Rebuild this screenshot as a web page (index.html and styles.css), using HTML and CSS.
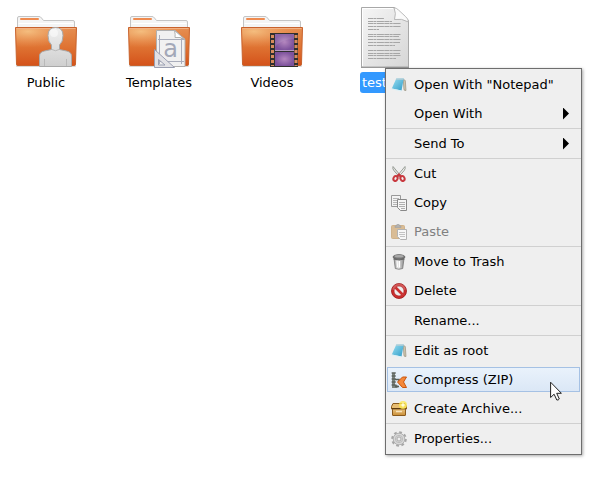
FILE: index.html
```
<!DOCTYPE html>
<html lang="en">
<head>
  <meta charset="UTF-8">
  <meta name="viewport" content="width=device-width, initial-scale=1.0">
  <title>Files</title>
  <link rel="stylesheet" href="styles.css">
</head>
<body>
  <!-- shared shapes -->
  <svg class="defs" width="0" height="0" aria-hidden="true">
    <defs>
      <linearGradient id="orange" x1="0" y1="0" x2="0" y2="1">
        <stop offset="0" stop-color="#e58f52"/>
        <stop offset="0.5" stop-color="#df7433"/>
        <stop offset="1" stop-color="#d4521a"/>
      </linearGradient>
      <radialGradient id="shine" cx="0.2" cy="0.15" r="0.7">
        <stop offset="0" stop-color="#f6c384" stop-opacity="0.9"/>
        <stop offset="1" stop-color="#f0a060" stop-opacity="0"/>
      </radialGradient>
      <linearGradient id="paper" x1="0" y1="0" x2="1" y2="1">
        <stop offset="0" stop-color="#f6f6f6"/>
        <stop offset="1" stop-color="#d6d6d6"/>
      </linearGradient>
      <linearGradient id="person" x1="0" y1="0" x2="0" y2="1">
        <stop offset="0" stop-color="#f0f0f0"/>
        <stop offset="1" stop-color="#cfcfcf"/>
      </linearGradient>
      <radialGradient id="purple">
        <stop offset="0" stop-color="#b487bf"/>
        <stop offset="1" stop-color="#7d529c"/>
      </radialGradient>
      <linearGradient id="blue" x1="0" y1="0" x2="1" y2="1">
        <stop offset="0" stop-color="#9be0f2"/>
        <stop offset="1" stop-color="#2f9cc8"/>
      </linearGradient>
      <linearGradient id="metal" x1="0" y1="0" x2="1" y2="0">
        <stop offset="0" stop-color="#999"/>
        <stop offset="0.4" stop-color="#eee"/>
        <stop offset="1" stop-color="#8a8a8a"/>
      </linearGradient>
      <linearGradient id="box" x1="0" y1="0" x2="0" y2="1">
        <stop offset="0" stop-color="#edc987"/>
        <stop offset="1" stop-color="#c98d35"/>
      </linearGradient>

      <symbol id="folder" viewBox="0 0 64 64">
        <rect x="2" y="60" width="60" height="3" rx="1" fill="#000" opacity="0.15"/>
        <path d="M3.500 26V14q0-1.500 1.500-1.500h20q1.500 0 2.500 1.500l2 2.500h29.500q1.500 0 1.500 1.500v8z" fill="#f4f4f4" stroke="#c4c4c4"/>
        <rect x="6" y="14" width="19" height="2" rx="1" fill="#ef8b50"/>
        <path d="M4.500 19.500h55" stroke="#fff"/>
        <path d="M1.500 23.500h61l-1 36.500q0 1.500-1.500 1.500H4q-1.500 0-1.500-1.500z" fill="url(#orange)" stroke="#c8622c"/>
        <path d="M2 24h60l-.6 14C42 40 22 44 3 47z" fill="url(#shine)"/>
        <path d="M2.500 24.500h59" stroke="#f3b183"/>
      </symbol>

      <symbol id="note" viewBox="0 0 16 16">
        <path d="M12.300 2.300l2 1.200.7 10-1.800-.3-.3-1.200z" fill="#cfc6ae" stroke="#8b8472" stroke-width=".6"/>
        <path d="M5.300 1.500h7.500L10.500 13.500.8 11.500z" fill="url(#blue)"/>
        <path d="M5.300 1.500h7.500l-.3 1.300H4.800z" fill="#b9cdd4"/>
        <path d="M.8 11.500l9.700 2-.2 1-9.700-2.200z" fill="#d9f0f7"/>
      </symbol>
    </defs>
  </svg>

  <main class="files">
    <button class="file" type="button">
      <svg class="file-icon" viewBox="0 0 64 64" aria-hidden="true">
        <use href="#folder"/>
        <path d="M25.500 62.500V52q0-4 5-5l7-1.500v-4.500q-3.500-3-3.500-9.500 0-8 7.500-8t7.500 8q0 6.500-3.500 9.500v4.500l7 1.500q5 1 5 5v10.500z" fill="url(#person)" stroke="#a9a9a9"/>
        <path d="M38 45.500q3.500 2.500 7 0M30.500 55v7M52.500 55v7" fill="none" stroke="#b9b9b9"/>
        <ellipse cx="40" cy="29" rx="4" ry="4" fill="#fff" opacity="0.5"/>
      </svg>
      <span class="file-name">Public</span>
    </button>
    <button class="file" type="button">
      <svg class="file-icon" viewBox="0 0 64 64" aria-hidden="true">
        <use href="#folder"/>
        <path d="M29.500 26.500H48l10 9v27H29.500z" fill="#f1f1f1" stroke="#b0b0b0"/>
        <path d="M32.500 31v29M54.500 33v27M31 35.500h26M31 57.500h26" stroke="#a9adbb"/>
        <path d="M47.500 26.500q1 4 .5 7 5-1 10 2z" fill="#fff" stroke="#b0b0b0"/>
        <text class="glyph" x="43.500" y="53" text-anchor="middle">a</text>
        <path d="M27.500 45.500v18h20z M31.500 55.500l6.500 5.500h-6.500z" fill="#e2e2e6" fill-rule="evenodd" stroke="#9a9fb2"/>
      </svg>
      <span class="file-name">Templates</span>
    </button>
    <button class="file" type="button">
      <svg class="file-icon" viewBox="0 0 64 64" aria-hidden="true">
        <use href="#folder"/>
        <rect x="30" y="29" width="28" height="34" fill="#303030"/>
        <path d="M32.500 31v31M56 31v31" stroke="#d78b5d" stroke-width="3" stroke-dasharray="3 2"/>
        <rect x="35" y="30" width="19" height="16" fill="url(#purple)"/>
        <rect x="35" y="48" width="19" height="14" fill="url(#purple)"/>
        <path d="M35 46.500h19" stroke="#b59ac4"/>
        <path d="M35 30h19v5q-12 0-19 8z" fill="#fff" opacity="0.1"/>
      </svg>
      <span class="file-name">Videos</span>
    </button>
    <button class="file selected" type="button">
      <svg class="file-icon" viewBox="0 0 64 64" aria-hidden="true">
        <path d="M8.500 3.500h32.500l14.500 13v46.500h-47z" fill="url(#paper)" stroke="#a8a8a8"/>
        <path d="M9.500 62V4.500H40" fill="none" stroke="#fff"/>
        <path d="M8 63.500h48" stroke="#999"/>
        <g stroke="#a6a6a6" stroke-dasharray="5 .4 3 .5 7 .4">
          <path d="M15 14.500h16M15 17.500h24M15 19.500h33M15 22.500h33M15 25.500h11"/>
          <path d="M15 30.500h33M15 32.500h31M15 35.500h33M15 38.500h32M15 41.500h27"/>
          <path d="M15 46.500h33M15 49.500h32M15 51.500h33M15 54.500h28"/>
        </g>
        <path d="M41 3.500q2.500 6 .5 12 7-1.500 14 2.500 0-3-3-5.500l-7-6.500q-2-2-4.500-2.500z" fill="#fafafa" stroke="#aaa" stroke-width=".8"/>
      </svg>
      <span class="file-name">test</span>
    </button>
  </main>

  <div class="menu" role="menu">
    <button class="item" type="button" role="menuitem">
      <svg class="icon" aria-hidden="true"><use href="#note"/></svg>
      Open With "Notepad"
    </button>
    <button class="item" type="button" role="menuitem">
      <span class="icon"></span>
      Open With
      <span class="arrow"></span>
    </button>
    <hr>
    <button class="item" type="button" role="menuitem">
      <span class="icon"></span>
      Send To
      <span class="arrow"></span>
    </button>
    <hr>
    <button class="item" type="button" role="menuitem">
      <svg class="icon" viewBox="0 0 16 16" aria-hidden="true">
        <path d="M2 .5q-.8 2 .8 4L8.500 11l1-1.500z" fill="#dfe1de" stroke="#878b84" stroke-width=".8"/>
        <path d="M14 .5q.8 2-.8 4L7.500 11l-1-1.500z" fill="#eceeea" stroke="#878b84" stroke-width=".8"/>
        <g fill="none" stroke="#c8383e" stroke-width="2">
          <ellipse cx="4.500" cy="12.500" rx="2" ry="2.500" transform="rotate(25 4.500 12.500)"/>
          <ellipse cx="11.500" cy="12.500" rx="2" ry="2.500" transform="rotate(-25 11.500 12.500)"/>
          <path d="M6 10.500L8 8.500l2 2"/>
        </g>
      </svg>
      Cut
    </button>
    <button class="item" type="button" role="menuitem">
      <svg class="icon" viewBox="0 0 16 16" aria-hidden="true">
        <path d="M.5.500h9v11h-9z" fill="#f3f3f3" stroke="#999"/>
        <path d="M2 3.500h6M2 5.500h6M2 7.500h6M2 9.500h4" stroke="#b5b5b5"/>
        <path d="M6.500 4.500h9v11h-6l-3-3z" fill="#f6f6f6" stroke="#888"/>
        <path d="M8 7.500h6M8 9.500h6M8 11.500h6M10 13.500h4" stroke="#b0b0b0"/>
      </svg>
      Copy
    </button>
    <button class="item" type="button" role="menuitem" disabled>
      <svg class="icon" viewBox="0 0 16 16" aria-hidden="true">
        <rect x=".5" y="1.500" width="13" height="13" rx="1" fill="#c58a3d" stroke="#b0762a"/>
        <path d="M4 3.500V2h1.500q0-2 1.500-2t1.500 2H10v1.500z" fill="#777" stroke="#555" stroke-width=".6"/>
        <path d="M6.500 5.500h9v10h-6l-3-3z" fill="#fff" stroke="#777"/>
        <path d="M8 8.500h6M8 10.500h6M9 12.500h5" stroke="#999"/>
      </svg>
      Paste
    </button>
    <hr>
    <button class="item" type="button" role="menuitem">
      <svg class="icon" viewBox="0 0 16 16" aria-hidden="true">
        <path d="M3 4.500h10l-1.300 10q-3.700 1.500-7.400 0z" fill="url(#metal)" stroke="#777" stroke-width=".8"/>
        <path d="M6 7l.5 6M8.500 7v6.500" stroke="#fff"/>
        <ellipse cx="8" cy="3" rx="6" ry="2.400" fill="#777" stroke="#555" stroke-width=".6"/>
        <ellipse cx="8" cy="2.300" rx="4.500" ry="1.300" fill="#aaa"/>
        <path d="M2.500 5q5.500 2 11 0" fill="none" stroke="#666"/>
      </svg>
      Move to Trash
    </button>
    <button class="item" type="button" role="menuitem">
      <svg class="icon" viewBox="0 0 16 16" aria-hidden="true">
        <circle cx="8" cy="8" r="7.500" fill="#cc3030" stroke="#9c1414" stroke-width=".8"/>
        <path d="M1.500 7a6.500 6.500 0 0 1 13 0z" fill="#fff" opacity="0.2"/>
        <circle cx="8" cy="8" r="5" fill="#eee" stroke="#a31b1b" stroke-width=".6"/>
        <path d="M4.500 4.500l7 7" stroke="#cc3030" stroke-width="2.600"/>
      </svg>
      Delete
    </button>
    <hr>
    <button class="item" type="button" role="menuitem">
      <span class="icon"></span>
      Rename...
    </button>
    <hr>
    <button class="item" type="button" role="menuitem">
      <svg class="icon" aria-hidden="true"><use href="#note"/></svg>
      Edit as root
    </button>
    <button class="item active" type="button" role="menuitem">
      <svg class="icon" viewBox="0 0 16 16" aria-hidden="true">
        <path d="M2.500.500v14h4" fill="none" stroke="#7b827d" stroke-width="3"/>
        <path d="M.5 1h4.500M.5 4h4.500M.5 7h4.500M.5 10h4.500M.5 13h5" stroke="#4d534f" stroke-width="1.200"/>
        <path d="M4 7.500h4v2.500M4 14.500h4" fill="none" stroke="#59605b" stroke-width="1.500"/>
        <path d="M15.500 5h-4L6.500 10l5 5.500h4L12.500 10z" fill="#f4883a" stroke="#c9550e"/>
      </svg>
      Compress (ZIP)
    </button>
    <button class="item" type="button" role="menuitem">
      <svg class="icon" viewBox="0 0 16 16" aria-hidden="true">
        <path d="M1.500 7.500h13v6.500q0 .5-.5.500H2q-.5 0-.5-.5z" fill="url(#box)" stroke="#8a5a1c"/>
        <path d="M2 2.500h12l1.500 3v2.500H.5V5.500z" fill="#e8bd71" stroke="#8a5a1c"/>
        <path d="M1 7.500h14" stroke="#5c380d"/>
        <path d="M5 10.500h6" stroke="#f7e3bc" stroke-width="1.500"/>
        <circle cx="12" cy="4" r="4" fill="#fce94f" opacity="0.8"/>
        <path d="M12 1l.8 2.200L15 4l-2.200.8L12 7l-.8-2.200L9 4l2.200-.8z" fill="#fffde0"/>
      </svg>
      Create Archive...
    </button>
    <hr>
    <button class="item" type="button" role="menuitem">
      <svg class="icon" viewBox="0 0 16 16" aria-hidden="true">
        <circle cx="8" cy="8" r="6.800" fill="none" stroke="#a6a6a6" stroke-width="2" stroke-dasharray="2.800 2.540"/>
        <circle cx="8" cy="8" r="5.800" fill="#d8d8d8" stroke="#a6a6a6" stroke-width=".8"/>
        <circle cx="8" cy="8" r="3.600" fill="none" stroke="#bbb"/>
        <circle cx="8" cy="8" r="2" fill="#efefef" stroke="#a0a0a0" stroke-width=".8"/>
      </svg>
      Properties...
    </button>

    <svg class="cursor" viewBox="0 0 12 20" aria-hidden="true">
      <path d="M.6 1.200v15.300l3.500-3.300 2.700 5.800q1.500.4 2.500-1L6.700 12.300h4.700z" fill="#fff" stroke="#222"/>
    </svg>
  </div>
</body>
</html>
```
FILE: styles.css
```
* {
  box-sizing: border-box;
  margin: 0;
  padding: 0;
}

body {
  font-family: 'DejaVu Sans', Verdana, sans-serif;
  font-size: 13px;
  color: #000;
  background: #fff;
  min-height: 100vh;
  position: relative;
}

button {
  font: inherit;
  color: inherit;
  background: none;
  border: none;
}

.defs {
  position: absolute;
}

/* file list */
.files {
  display: flex;
  flex-wrap: wrap;
  gap: 21px;
  padding-top: 4px;
}

.file {
  width: 92px;
  display: flex;
  flex-direction: column;
  align-items: center;
  gap: 4px;
}

.file-icon {
  width: 64px;
  height: 64px;
}

.file-name {
  padding: 0 2px;
  line-height: 21px;
  border-radius: 3px;
}

.file.selected .file-name {
  min-width: 50px;
  text-align: left;
  color: #fff;
  background: #3399ff;
}

.glyph {
  font-family: 'DejaVu Sans', sans-serif;
  font-size: 24px;
  fill: #a3a8b8;
}

/* context menu */
.menu {
  position: absolute;
  top: 68px;
  left: 385px;
  width: 197px;
  padding: 1px;
  background: #efefef;
  border: 1px solid #6e6e6e;
  box-shadow: 1px 1px 3px rgba(0, 0, 0, 0.35);
  display: flex;
  flex-direction: column;
}

.menu hr {
  border: none;
  border-top: 1px solid #d0d0d0;
  margin: 0 -1px;
}

.item {
  display: flex;
  align-items: center;
  gap: 7px;
  height: 25px;
  margin: 2px 0;
  padding: 0 10px 0 3px;
  border: 1px solid transparent;
  text-align: left;
  white-space: nowrap;
}

.item.active {
  background: linear-gradient(#e9f2fb, #dbe7f6);
  border-color: #a5c1e4;
}

.item:disabled {
  color: #808080;
}

.item:disabled .icon {
  opacity: 0.5;
}

.icon {
  width: 16px;
  height: 16px;
  flex: none;
}

.arrow {
  width: 6px;
  height: 12px;
  margin-left: auto;
  background: #000;
  clip-path: polygon(0 0, 100% 50%, 0 100%);
}

.cursor {
  position: absolute;
  top: 312px;
  left: 164px;
  width: 12px;
  height: 20px;
}
```
